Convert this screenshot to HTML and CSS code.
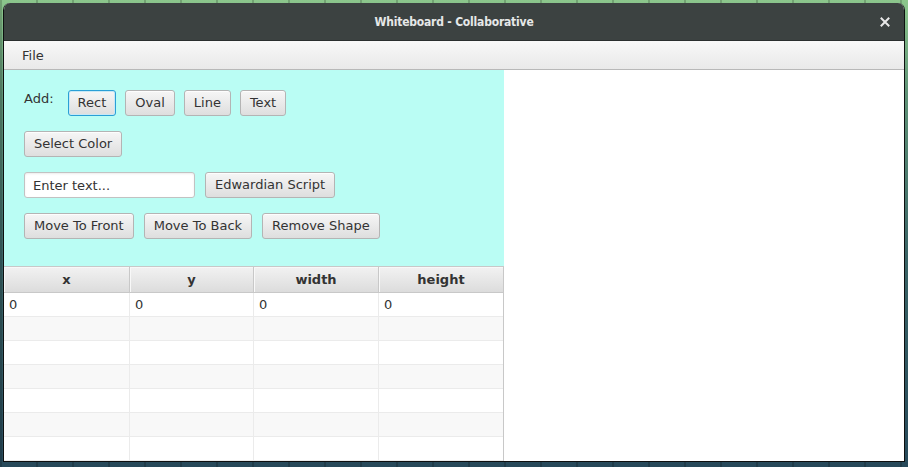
FILE: index.html
```html
<!DOCTYPE html>
<html>
<head>
<meta charset="utf-8">
<link rel="stylesheet" href="styles.css">
</head>
<body>
<div class="window">
  <div class="titlebar">
    <span class="title">Whiteboard - Collaborative</span>
    <span class="close">
      <svg width="10" height="10" viewBox="0 0 10 10"><path d="M1.5 1.5 L8.5 8.5 M8.5 1.5 L1.5 8.5" stroke="#e8e8e8" stroke-width="2" stroke-linecap="square"/></svg>
    </span>
  </div>
  <div class="menubar"><span class="menu">File</span></div>
  <div class="main">
    <div class="left">
      <div class="controls">
        <div class="row">
          <span class="label">Add:</span>
          <div class="group">
            <button class="btn focused">Rect</button>
            <button class="btn">Oval</button>
            <button class="btn">Line</button>
            <button class="btn">Text</button>
          </div>
        </div>
        <div class="row">
          <button class="btn">Select Color</button>
        </div>
        <div class="row">
          <input class="field" type="text" value="Enter text...">
          <button class="btn">Edwardian Script</button>
        </div>
        <div class="row">
          <button class="btn">Move To Front</button>
          <button class="btn">Move To Back</button>
          <button class="btn">Remove Shape</button>
        </div>
      </div>
      <div class="table">
        <div class="thead">
          <div class="th">x</div><div class="th">y</div><div class="th">width</div><div class="th">height</div>
        </div>
        <div class="tr"><div class="td">0</div><div class="td">0</div><div class="td">0</div><div class="td">0</div></div>
        <div class="tr odd"><div class="td"></div><div class="td"></div><div class="td"></div><div class="td"></div></div>
        <div class="tr"><div class="td"></div><div class="td"></div><div class="td"></div><div class="td"></div></div>
        <div class="tr odd"><div class="td"></div><div class="td"></div><div class="td"></div><div class="td"></div></div>
        <div class="tr"><div class="td"></div><div class="td"></div><div class="td"></div><div class="td"></div></div>
        <div class="tr odd"><div class="td"></div><div class="td"></div><div class="td"></div><div class="td"></div></div>
        <div class="tr"><div class="td"></div><div class="td"></div><div class="td"></div><div class="td"></div></div>
      </div>
    </div>
    <div class="canvas"></div>
  </div>
</div>
</body>
</html>
```
FILE: styles.css
```css
* { box-sizing: border-box; }
html, body { margin: 0; padding: 0; }
body {
  width: 908px;
  height: 467px;
  overflow: hidden;
  background:
    repeating-linear-gradient(to right, rgba(0,0,0,0.18) 0 2px, transparent 2px 36px),
    linear-gradient(to bottom, #8cc68c 0%, #5f9377 20%, #3a6466 55%, #27495a 100%);
  font-family: "DejaVu Sans", sans-serif;
  font-size: 13px;
  color: #333;
  padding: 3px 3px 0 3px;
}
.window {
  width: 902px;
  height: 459px;
  display: flex;
  flex-direction: column;
  border-radius: 7px 7px 0 0;
  overflow: hidden;
  border: 1px solid #0d0f0f;
  border-top: none;
  background: #fff;
}
.titlebar {
  height: 38px;
  flex: none;
  background: #3c4241;
  display: flex;
  align-items: center;
  justify-content: center;
  position: relative;
  border-bottom: 1px solid #2a2e2e;
}
.title {
  font-family: "DejaVu Sans Condensed", "DejaVu Sans", sans-serif;
  font-weight: bold;
  font-size: 12px;
  color: #e6e8e8;
  letter-spacing: -0.2px;
}
.close {
  position: absolute;
  right: 14px;
  top: 14px;
  width: 10px;
  height: 10px;
  display: block;
  line-height: 0;
}
.menubar {
  height: 29px;
  flex: none;
  background: linear-gradient(to bottom, #f8f8f8, #e9e9e9);
  border-bottom: 1px solid #b8b8b8;
  display: flex;
  align-items: center;
  padding-left: 18px;
}
.menu { font-size: 13px; color: #333; }
.main {
  flex: 1;
  display: flex;
  min-height: 0;
}
.left {
  width: 500px;
  flex: none;
  background: #bafdf4;
  display: flex;
  flex-direction: column;
}
.controls {
  padding: 20px 20px 27px 20px;
  display: flex;
  flex-direction: column;
  gap: 15px;
}
.row {
  display: flex;
  align-items: flex-start;
  gap: 10px;
  height: 26px;
}
.label {
  line-height: 16px;
  margin-top: 1px;
  margin-right: 4px;
}
.group { display: flex; gap: 9px; }
.btn {
  font-family: "DejaVu Sans", sans-serif;
  font-size: 13px;
  color: #333;
  height: 26px;
  padding: 0 9px;
  border: 1px solid #b4b4b4;
  border-radius: 3px;
  background: linear-gradient(to bottom, #f6f6f6, #dedede);
  box-shadow: inset 0 1px 0 #fdfdfd;
  margin: 0;
  line-height: 24px;
}
.btn.focused {
  border-color: #2a9fd6;
  box-shadow: inset 0 0 0 1px #c7e8f5;
}
.field {
  width: 171px;
  height: 26px;
  font-family: "DejaVu Sans", sans-serif;
  font-size: 13px;
  color: #333;
  border: 1px solid #c2c2c2;
  border-radius: 3px;
  padding: 0 8px;
  background: #fff;
  box-shadow: inset 0 1px 2px rgba(0,0,0,0.08);
  margin: 0;
}
.table {
  flex: 1;
  background: #fff;
  border-right: 1px solid #c8c8c8;
  display: flex;
  flex-direction: column;
  overflow: hidden;
}
.thead {
  display: grid;
  grid-template-columns: 126px 124px 125px 1fr;
  height: 27px;
  flex: none;
  border-top: 1px solid #c8c8c8;
  border-bottom: 1px solid #c8c8c8;
  background: linear-gradient(to bottom, #f2f2f2, #dcdcdc);
}
.th {
  font-weight: bold;
  font-size: 13px;
  color: #333;
  display: flex;
  align-items: center;
  justify-content: center;
  border-right: 1px solid #c8c8c8;
  box-shadow: inset 1px 1px 0 #f8f8f8;
}
.th:last-child { border-right: none; }
.tr {
  display: grid;
  grid-template-columns: 126px 124px 125px 1fr;
  height: 24px;
  flex: none;
  border-bottom: 1px solid #ebebeb;
  background: #fff;
}
.tr.odd { background: #f8f8f8; }
.td {
  border-right: 1px solid #ebebeb;
  padding-left: 5px;
  line-height: 23px;
  color: #333;
}
.td:last-child { border-right: none; }
.canvas {
  flex: 1;
  background: #fff;
}
```
